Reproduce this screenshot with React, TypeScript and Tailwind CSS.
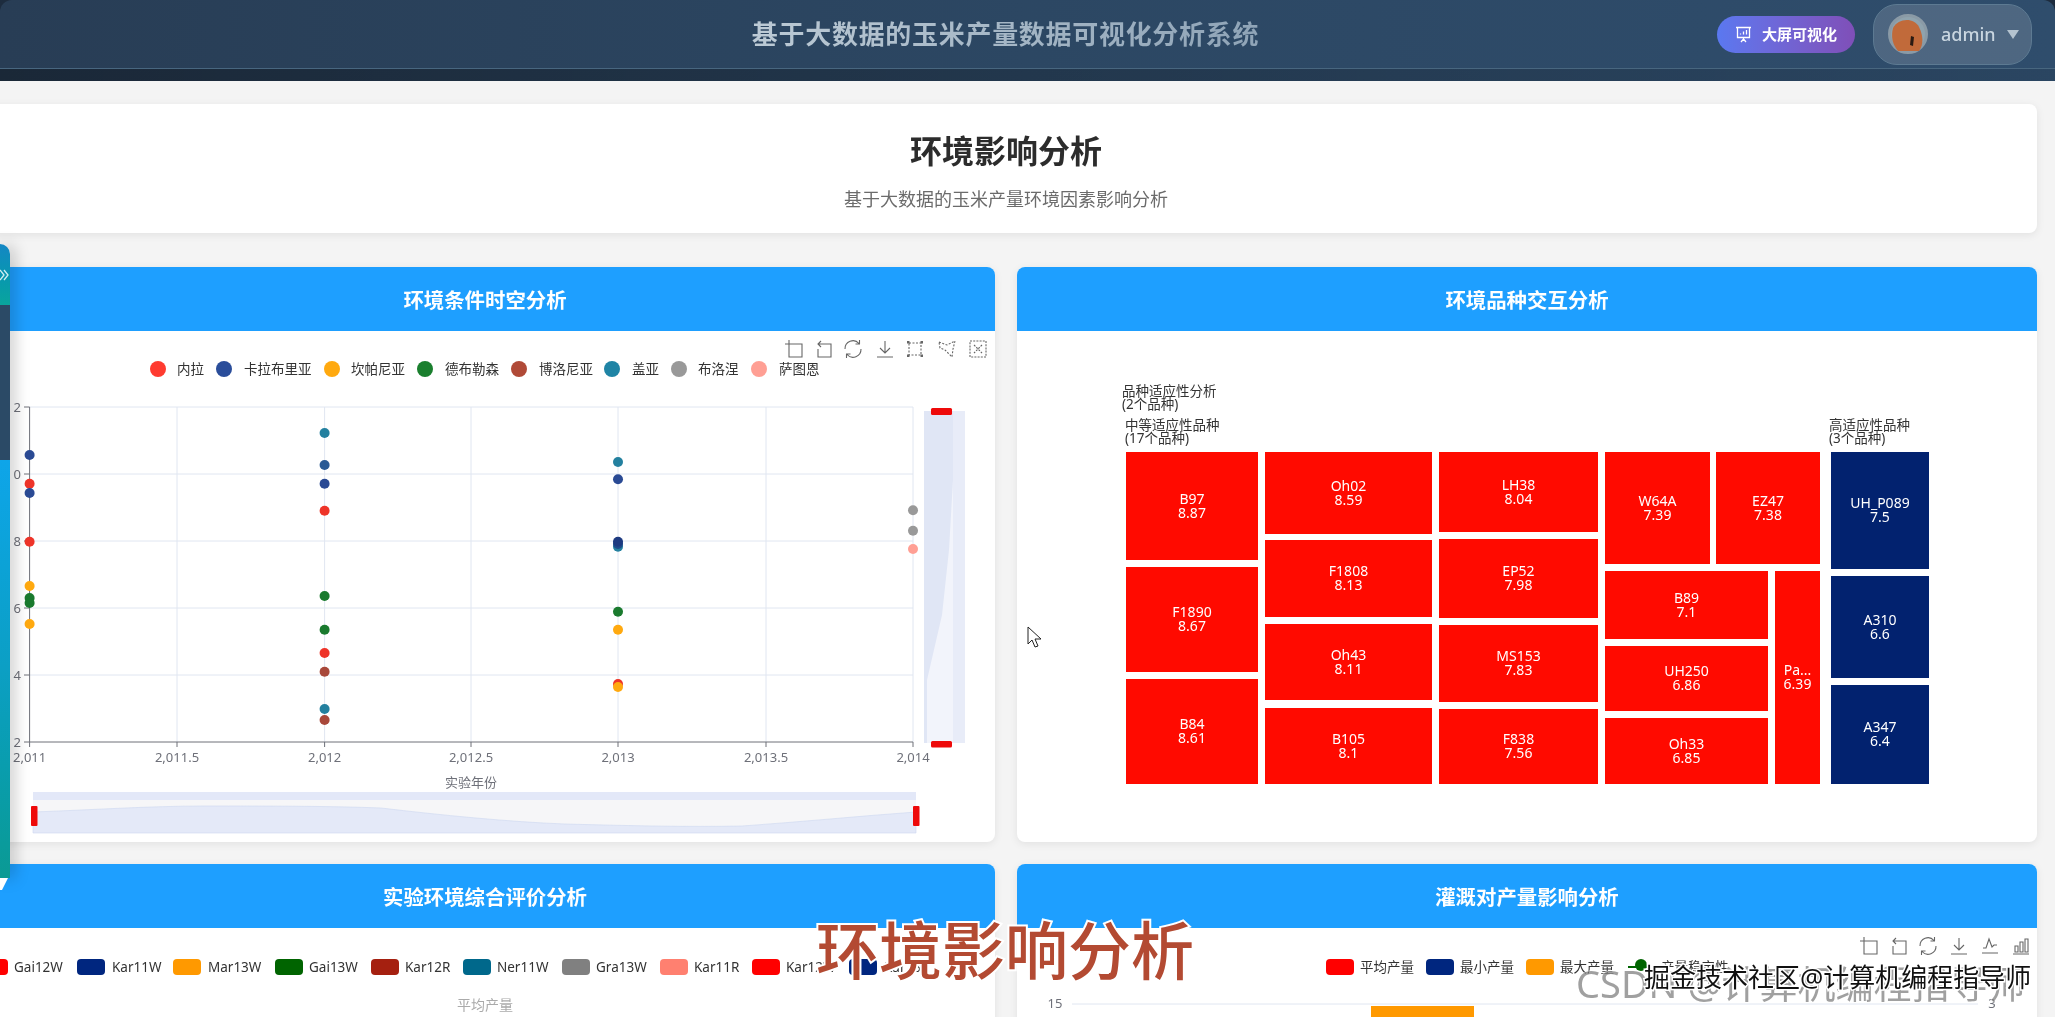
import React from "react";

const GRAY = "#666";

function Tool({ x, y, kind }: { x: number; y: number; kind: string }) {
  const common = { fill: "none", stroke: GRAY, strokeWidth: 1.1 };
  return (
    <g transform={`translate(${x},${y})`} {...common}>
      {kind === "zoom" && <path d="M4 0v17h13V4H0" />}
      {kind === "back" && <path d="M3 4h13v13H3V9M6 1L3 4l3 3" />}
      {kind === "restore" && <path d="M1 9a8 8 0 0 1 14-5.5M17 9a8 8 0 0 1-14 5.5M15.5 0v4h-4M2.5 18v-4h4" />}
      {kind === "save" && <path d="M9 1v12M4 8l5 5 5-5M1 17h16" />}
      {kind === "rect" && (
        <>
          <path d="M3 3h12v12H3z" strokeDasharray="2 1.5" />
          <path d="M1 1h2.5v2.5H1zM14.5 1H17v2.5h-2.5zM1 14.5h2.5V17H1zM14.5 14.5H17V17h-2.5z" fill={GRAY} stroke="none" />
        </>
      )}
      {kind === "poly" && <path d="M1 2L9 5l8-4-2 8-1 8-7-7-5-2z" strokeDasharray="2 1.5" />}
      {kind === "clear" && <path d="M1 1h16v16H1zM5 5l8 8M13 5l-8 8" strokeDasharray="2 1.2" />}
      {kind === "line" && <path d="M1 16h16M2 11h3l3-9 3 8 2-2h3" />}
      {kind === "bar" && <path d="M1 17h16M3 15V9h3v6zM8 15V5h3v10zM13 15V2h3v13z" />}
    </g>
  );
}

const scatter: [number, number, string][] = [
  [29.6, 455, "#2a4a94"], [29.6, 483.7, "#ee3429"], [29.6, 493, "#2a4a94"], [29.6, 541.7, "#ee3429"],
  [29.6, 586, "#ffa90f"], [29.6, 598, "#1a7a2e"], [29.6, 603, "#1a7a2e"], [29.6, 624, "#ffa90f"],
  [324.6, 433, "#23809f"], [324.6, 465, "#2a5a94"], [324.6, 483.7, "#2a4a94"], [324.6, 510.7, "#ee3429"],
  [324.6, 596, "#1a7a2e"], [324.6, 629.7, "#1a7a2e"], [324.6, 653, "#ee3429"], [324.6, 671.7, "#a8483a"],
  [324.6, 709, "#23809f"], [324.6, 720, "#a8483a"],
  [618, 462, "#23809f"], [618, 479.3, "#2a4a94"], [618, 546.7, "#23809f"], [618, 544, "#1d4a8a"], [618, 541.7, "#1d3a80"],
  [618, 611.7, "#1a7a2e"], [618, 629.7, "#ffa90f"], [618, 684, "#ee3429"], [618, 687, "#ffa90f"],
  [913, 510.3, "#999"], [913, 530.7, "#999"], [913, 549, "#ff9f94"],
];

const legend1: [number, number, string, string][] = [
  [158, 177, "#ff3b30", "内拉"], [224, 244, "#2a4d9a", "卡拉布里亚"], [332, 351, "#ffa90f", "坎帕尼亚"],
  [425, 445, "#1a7f2e", "德布勒森"], [519, 539, "#b04a37", "博洛尼亚"], [612, 632, "#1f84a5", "盖亚"],
  [679, 698, "#999", "布洛涅"], [759, 779, "#ff9f94", "萨图恩"],
];

const grid = [407, 474, 541, 608, 675];
const vertical = [177, 324.6, 471, 618, 766, 913];
const ylabels: [number, string][] = [[407, "2"], [474, "0"], [541, "8"], [608, "6"], [675, "4"], [742, "2"]];
const xlabels: [number, string][] = [
  [29.6, "2,011"], [177, "2,011.5"], [324.6, "2,012"], [471, "2,012.5"], [618, "2,013"], [766, "2,013.5"], [913, "2,014"],
];

const tree: [number, number, number, number, string, string, string][] = [
  [1126, 452, 1258, 560, "B97", "8.87", "#ff0a00"],
  [1126, 567, 1258, 672, "F1890", "8.67", "#ff0a00"],
  [1126, 679, 1258, 784, "B84", "8.61", "#ff0a00"],
  [1265, 452, 1432, 534, "Oh02", "8.59", "#ff0a00"],
  [1265, 540, 1432, 617, "F1808", "8.13", "#ff0a00"],
  [1265, 624, 1432, 700, "Oh43", "8.11", "#ff0a00"],
  [1265, 708, 1432, 784, "B105", "8.1", "#ff0a00"],
  [1439, 452, 1598, 532, "LH38", "8.04", "#ff0a00"],
  [1439, 539, 1598, 618, "EP52", "7.98", "#ff0a00"],
  [1439, 625, 1598, 702, "MS153", "7.83", "#ff0a00"],
  [1439, 709, 1598, 784, "F838", "7.56", "#ff0a00"],
  [1605, 452, 1710, 564, "W64A", "7.39", "#ff0a00"],
  [1716, 452, 1820, 564, "EZ47", "7.38", "#ff0a00"],
  [1605, 571, 1768, 639, "B89", "7.1", "#ff0a00"],
  [1605, 646, 1768, 711, "UH250", "6.86", "#ff0a00"],
  [1605, 718, 1768, 784, "Oh33", "6.85", "#ff0a00"],
  [1775, 571, 1820, 784, "Pa...", "6.39", "#ff0a00"],
  [1831, 452, 1929, 569, "UH_P089", "7.5", "#02226f"],
  [1831, 576, 1929, 678, "A310", "6.6", "#02226f"],
  [1831, 685, 1929, 784, "A347", "6.4", "#02226f"],
];

const legendLeft: [number, number, string, string][] = [
  [-20, 14, "#ff0000", "Gai12W"], [77, 112, "#00267f", "Kar11W"], [173, 208, "#ff9900", "Mar13W"],
  [275, 309, "#006400", "Gai13W"], [371, 405, "#a52010", "Kar12R"], [463, 497, "#00688b", "Ner11W"],
  [562, 596, "#808080", "Gra13W"], [660, 694, "#ff8070", "Kar11R"], [752, 786, "#ff0000", "Kar12W"],
  [849, 884, "#00267f", "Kar13R"],
];

const legendRight: [number, number, string, string][] = [
  [1326, 1360, "#ff0000", "平均产量"], [1426, 1460, "#00267f", "最小产量"], [1526, 1560, "#ff9900", "最大产量"],
];

function Card({ title, children }: { title: string; children: React.ReactNode }) {
  return (
    <section className="overflow-hidden rounded-lg bg-white shadow-[0_2px_8px_rgba(0,0,0,0.08)]">
      <h2 className="flex h-16 items-center justify-center bg-[#1e9fff] pt-[3px] text-[20.4px] font-bold text-white">{title}</h2>
      {children}
    </section>
  );
}

function Scatter() {
  return (
    <svg className="block" width={1020} height={511} viewBox="-25 331 1020 511">
      {grid.map((y) => <line key={y} x1={29.6} x2={913} y1={y} y2={y} stroke="#e0e6f1" strokeWidth={1} />)}
      {vertical.map((x) => <line key={x} x1={x} x2={x} y1={407} y2={742} stroke="#e0e6f1" strokeWidth={1} />)}
      <line x1={29.6} x2={29.6} y1={407} y2={742} stroke="#6e7079" />
      <line x1={29.6} x2={913} y1={742} y2={742} stroke="#6e7079" />
      {ylabels.map(([y]) => <line key={y} x1={24} x2={29.6} y1={y} y2={y} stroke="#6e7079" />)}
      {vertical.concat(29.6).map((x) => <line key={x} x1={x} x2={x} y1={742} y2={747} stroke="#6e7079" />)}
      <g fontSize={13} fill="#6e7079">
        {ylabels.map(([y, t]) => <text key={y} x={21} y={y} textAnchor="end" dominantBaseline="central">{t}</text>)}
        {xlabels.map(([x, t]) => <text key={x} x={x} y={757} textAnchor="middle" dominantBaseline="central">{t}</text>)}
        <text x={471} y={782} textAnchor="middle" dominantBaseline="central">实验年份</text>
      </g>
      {scatter.map(([x, y, c], i) => <circle key={i} cx={x} cy={y} r={5} fill={c} />)}
      <g fontSize={13.5} fill="#333">
        {legend1.map(([cx, tx, c, t]) => (
          <g key={t}>
            <circle cx={cx} cy={369} r={8} fill={c} />
            <text x={tx} y={369} dominantBaseline="central">{t}</text>
          </g>
        ))}
      </g>
      {[["zoom", 785], ["back", 815], ["restore", 844], ["save", 876], ["rect", 906], ["poly", 938], ["clear", 969]].map(([k, x]) => (
        <Tool key={k as string} kind={k as string} x={x as number} y={340} />
      ))}
      <rect x={924} y={411} width={41} height={332} fill="#e8ecf8" />
      <rect x={924} y={411} width={29} height={332} fill="#e0e6f5" />
      <path d="M953 480L949 550L942 615L927 680V743H953Z" fill="#f2f4fb" />
      <rect x={931} y={408} width={21} height={7} rx={1.5} fill="#ee0a0a" />
      <rect x={931} y={741} width={21} height={6.5} rx={1.5} fill="#ee0a0a" />
      <rect x={33} y={792} width={883} height={41} fill="#f6f6f8" />
      <rect x={33} y={792} width={883} height={8} fill="#e3e8f8" />
      <path d="M33 812C90 810 150 806 204 806C270 806 330 806 381 808C440 815 510 822 565 824C640 826 690 827 742 826C800 822 860 816 916 812V833H33Z" fill="#e4e9f8" stroke="#cdd6f0" strokeWidth={0.6} />
      <rect x={31} y={806} width={6.5} height={20} rx={1} fill="#ee0a0a" />
      <rect x={913} y={806} width={6.5} height={20} rx={1} fill="#ee0a0a" />
    </svg>
  );
}

function Treemap() {
  return (
    <svg className="block" width={1020} height={511} viewBox="1017 331 1020 511">
      <g fontSize={13.5} fill="#333">
        <text x={1122} y={391} dominantBaseline="central">品种适应性分析</text>
        <text x={1122} y={404} dominantBaseline="central">(2个品种)</text>
        <text x={1125} y={425} dominantBaseline="central">中等适应性品种</text>
        <text x={1125} y={438} dominantBaseline="central">(17个品种)</text>
        <text x={1829} y={425} dominantBaseline="central">高适应性品种</text>
        <text x={1829} y={438} dominantBaseline="central">(3个品种)</text>
      </g>
      {tree.map(([x0, y0, x1, y1, n, v, c]) => {
        const cx = (x0 + x1) / 2;
        const cy = (y0 + y1) / 2;
        return (
          <g key={n}>
            <rect x={x0} y={y0} width={x1 - x0} height={y1 - y0} fill={c} />
            <text x={cx} y={cy - 8} fontSize={14} fill="#fff" textAnchor="middle" dominantBaseline="central">{n}</text>
            <text x={cx} y={cy + 6} fontSize={14} fill="#fff" textAnchor="middle" dominantBaseline="central">{v}</text>
          </g>
        );
      })}
    </svg>
  );
}

function EnvChart() {
  return (
    <svg className="block" width={1020} height={300} viewBox="-25 928 1020 300">
      <g fontSize={13.5} fill="#333">
        {legendLeft.map(([sx, tx, c, t]) => (
          <g key={sx}>
            <rect x={sx} y={959} width={28} height={16} rx={4} fill={c} />
            <text x={tx} y={967} dominantBaseline="central">{t}</text>
          </g>
        ))}
      </g>
      <text x={485} y={1004} fontSize={14} fill="#aaa" textAnchor="middle" dominantBaseline="central">平均产量</text>
    </svg>
  );
}

function IrrigationChart() {
  return (
    <svg className="block" width={1020} height={300} viewBox="1017 928 1020 300">
      {[["zoom", 1860], ["back", 1890], ["restore", 1919], ["save", 1950], ["line", 1981], ["bar", 2012]].map(([k, x]) => (
        <Tool key={k as string} kind={k as string} x={x as number} y={937} />
      ))}
      <g fontSize={13.5} fill="#333">
        {legendRight.map(([sx, tx, c, t]) => (
          <g key={t}>
            <rect x={sx} y={959} width={28} height={16} rx={4} fill={c} />
            <text x={tx} y={967} dominantBaseline="central">{t}</text>
          </g>
        ))}
        <line x1={1628} x2={1648} y1={967} y2={967} stroke="#006400" strokeWidth={2} />
        <circle cx={1641} cy={965} r={6} fill="#006400" />
        <text x={1661} y={967} dominantBaseline="central">产量稳定性</text>
      </g>
      <line x1={1072} x2={1978} y1={1004} y2={1004} stroke="#e0e6f1" />
      <rect x={1371} y={1006} width={103} height={40} fill="#ff9900" />
      <g fontSize={13} fill="#6e7079">
        <text x={1055} y={1003} textAnchor="middle" dominantBaseline="central">15</text>
        <text x={1992} y={1003} textAnchor="middle" dominantBaseline="central">3</text>
      </g>
    </svg>
  );
}

export default function App() {
  return (
    <div className="relative h-[1017px] w-[2055px] overflow-hidden bg-[#f4f4f4] blur-[0.4px] [font-family:'Noto_Sans','Noto_Sans_CJK_SC',sans-serif]">
      <div className="bg-[#1d2c3e]">
        <header className="flex h-[81px] flex-col overflow-hidden rounded-t-xl bg-gradient-to-r from-[#283d55] via-[#2c4763] to-[#2f4d6c]">
          <div className="flex h-[69px] shrink-0 items-center border-b border-[#48667f] pr-[23px]">
            <div className="flex-1 pl-[294px] text-center">
              <span className="bg-gradient-to-r from-[#bccad5] to-[#8fa4b7] bg-clip-text text-[26px] font-bold tracking-[0.7px] text-transparent">
                基于大数据的玉米产量数据可视化分析系统
              </span>
            </div>
            <div className="flex items-center gap-[18px]">
              <button className="flex h-[37px] w-[138px] items-center justify-center gap-[10px] rounded-[19px] bg-gradient-to-r from-[#5a78f0] to-[#7f4fb8] text-[15px] font-bold text-white">
                <svg width="17" height="17" viewBox="0 0 17 17" fill="none" stroke="#fff" strokeWidth="1.3">
                  <path d="M1 1.5h15M2.5 1.5v10h12v-10M8.5 11.5v2M6 16l2.5-3 2.5 3M5.5 8.5v-1M8.5 8.5v-3M11.5 8.5v-4.5" />
                </svg>
                大屏可视化
              </button>
              <div className="flex h-[61px] w-[159px] items-center rounded-[24px] border border-[#5d7a92] bg-white/15 pl-[14px]">
                <svg width="40" height="40" viewBox="0 0 40 40" className="shrink-0">
                  <circle cx="20" cy="20" r="18.5" fill="#8fa3ae" stroke="#8a9aa6" strokeWidth="3" />
                  <path d="M5 14C10 4 26 3 31 13C35 21 36 30 31 37L10 37C4 30 3 22 5 14Z" fill="#c16a3a" />
                  <path d="M23 22l3 1-1 9-3-1z" fill="#2a1a12" />
                </svg>
                <span className="ml-[13px] text-[18px] font-medium text-[#c9d6e0]">admin</span>
                <svg width="12" height="9" viewBox="0 0 12 9" className="ml-[11px]">
                  <path d="M0 0h12L6 9z" fill="#b4c3cf" />
                </svg>
              </div>
            </div>
          </div>
          <div className="flex-1 bg-gradient-to-r from-black/35 to-black/10" />
        </header>
      </div>

      <main className="-ml-[25px] w-[2062px] pt-[23px]">
        <section className="h-[129px] rounded-lg bg-white pt-[24px] text-center shadow-[0_2px_8px_rgba(0,0,0,0.08)]">
          <h1 className="text-[32px] leading-[46px] font-bold text-[#2c2c2c]">环境影响分析</h1>
          <p className="mt-[13px] text-[18px] leading-[24px] text-[#6b6b6b]">基于大数据的玉米产量环境因素影响分析</p>
        </section>
        <div className="mt-[34px] grid grid-cols-2 gap-[22px]">
          <Card title="环境条件时空分析"><Scatter /></Card>
          <Card title="环境品种交互分析"><Treemap /></Card>
          <Card title="实验环境综合评价分析"><EnvChart /></Card>
          <Card title="灌溉对产量影响分析"><IrrigationChart /></Card>
        </div>
      </main>

      {/* side drawer peeking over the page */}
      <div className="absolute top-[244px] left-0 flex h-[634px] w-[10px] flex-col overflow-hidden rounded-tr-[10px] shadow-[3px_0_16px_rgba(0,0,0,0.28)]">
        <div className="flex h-[61px] items-center bg-gradient-to-b from-[#1486c4] to-[#0aa59c]">
          <svg width="9" height="14" viewBox="0 0 9 14" fill="none" stroke="#cfeef0" strokeWidth="1.3">
            <path d="M0 2l4 5-4 5M4 2l4 5-4 5" />
          </svg>
        </div>
        <div className="h-[155px] bg-[#2b4a66]" />
        <div className="flex-1 bg-gradient-to-b from-[#0ea5e9] via-[#0c9fc4] to-[#0b9a94]" />
      </div>
      <svg className="absolute top-[878px] left-0" width="9" height="12" viewBox="0 0 9 12">
        <path d="M0 0H8L2 12H0Z" fill="#fff" />
      </svg>

      {/* mouse cursor */}
      <svg className="absolute top-[626px] left-[1027px]" width="15" height="22" viewBox="0 0 15 22">
        <path d="M1 1v17l4-4 3 7 3-1-3-7h6z" fill="#fff" stroke="#222" strokeWidth="1" />
      </svg>

      {/* video caption and watermarks */}
      <div className="absolute top-[918px] left-[816px] text-[63px] leading-[63px] font-medium whitespace-nowrap text-[#b34a32] [-webkit-text-stroke:4px_white] [paint-order:stroke_fill]">
        环境影响分析
      </div>
      <div className="absolute top-[958px] left-[1576px] text-[38px] leading-[50px] whitespace-nowrap text-[#777]/70 [-webkit-text-stroke:1px_rgba(255,255,255,0.6)] [paint-order:stroke_fill]">
        CSDN @计算机编程指导师
      </div>
      <div className="absolute top-[960px] left-[1644px] text-[26px] leading-[34px] whitespace-nowrap text-[#111] [-webkit-text-stroke:3px_white] [paint-order:stroke_fill]">
        掘金技术社区@计算机编程指导师
      </div>
    </div>
  );
}
